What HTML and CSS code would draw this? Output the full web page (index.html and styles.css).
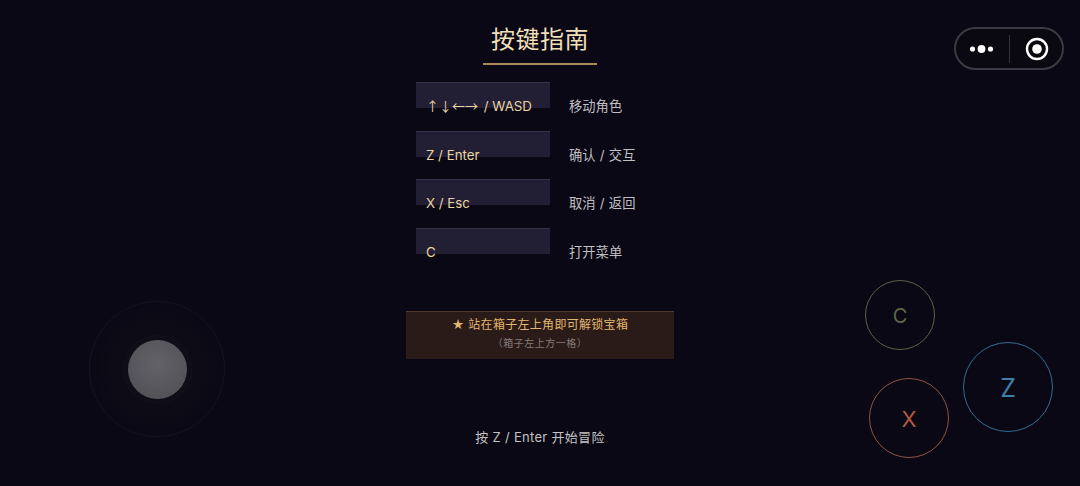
FILE: index.html
```html
<!DOCTYPE html>
<html lang="zh">
<head>
<meta charset="utf-8">
<title>按键指南</title>
<link rel="stylesheet" href="styles.css">
</head>
<body>
<main class="guide">
  <h1 class="title">按键指南</h1>
  <div class="rows">
    <div class="row"><span class="key"><span class="arrows">↑↓←→</span> / WASD</span><span class="desc">移动角色</span></div>
    <div class="row"><span class="key">Z / Enter</span><span class="desc">确认 / 交互</span></div>
    <div class="row"><span class="key">X / Esc</span><span class="desc">取消 / 返回</span></div>
    <div class="row"><span class="key">C</span><span class="desc">打开菜单</span></div>
  </div>
  <div class="notice">
    <div class="notice-main">★ 站在箱子左上角即可解锁宝箱</div>
    <div class="notice-sub">（箱子左上方一格）</div>
  </div>
  <div class="start">按 Z / Enter 开始冒险</div>
</main>

<div class="capsule">
  <svg class="dots" width="26" height="10" viewBox="0 0 26 10"><circle cx="3.5" cy="5" r="2.6"/><circle cx="12.5" cy="5" r="3.9"/><circle cx="21.5" cy="5" r="2.6"/></svg>
  <span class="capsule-line"></span>
  <svg class="target" width="24" height="24" viewBox="0 0 24 24"><circle cx="12" cy="12" r="10" fill="none" stroke="#fff" stroke-width="2.4"/><circle cx="12" cy="12" r="4.8" fill="#fff"/></svg>
</div>

<div class="stick"><div class="stick-knob"></div></div>
<div class="pad pad-c">C</div>
<div class="pad pad-x">X</div>
<div class="pad pad-z">Z</div>
</body>
</html>
```
FILE: styles.css
```css
* { box-sizing: border-box; }
html, body { margin: 0; height: 100%; }
body {
  position: relative;
  width: 1080px;
  height: 486px;
  overflow: hidden;
  background: #090814;
  font-family: Inter, "Noto Sans CJK SC", sans-serif;
}
.guide {
  display: flex;
  flex-direction: column;
  align-items: center;
  padding-top: 22px;
}
.title {
  margin: 0;
  padding: 0 8px;
  height: 43px;
  font-size: 24px;
  font-weight: 400;
  line-height: 35px;
  letter-spacing: 0.5px;
  color: #f0dfb8;
  border-bottom: 2px solid #a88a5a;
}
.rows {
  width: 248px;
  margin-top: 17px;
  display: flex;
  flex-direction: column;
}
.row {
  display: flex;
  height: 48.5px;
  align-items: flex-start;
}
.key {
  width: 134px;
  height: 26px;
  padding-left: 10px;
  line-height: 46px;
  font-size: 13.3px;
  color: #e9d5a4;
  background: #221e33;
  border-top: 1px solid #37324a;
  white-space: nowrap;
}
.arrows {
  margin-right: 2px;
  font-family: "Noto Sans CJK SC", sans-serif;
  font-size: 13px;
}
.desc {
  margin-left: 19px;
  line-height: 48px;
  font-size: 13.3px;
  word-spacing: 0.5px;
  color: #c0bfc3;
  white-space: nowrap;
}
.notice {
  width: 268px;
  height: 48px;
  margin-top: 35px;
  padding-top: 4px;
  background: #2a1b18;
  border-top: 1px solid #4d3a2b;
  text-align: center;
}
.notice-main {
  font-size: 12px;
  line-height: 18px;
  letter-spacing: 0.3px;
  color: #e3b670;
}
.notice-sub {
  font-size: 10px;
  line-height: 19px;
  letter-spacing: 0.5px;
  color: #857c78;
}
.start {
  margin-top: 68px;
  font-size: 13px;
  line-height: 20px;
  letter-spacing: 0.3px;
  color: #c4c3c6;
}
.capsule {
  position: absolute;
  left: 954px;
  top: 27px;
  width: 110px;
  height: 43px;
  display: flex;
  align-items: center;
  border: 2px solid #3b3a43;
  border-radius: 22px;
  background: #0a0911;
}
.dots { margin-left: 13px; fill: #fff; }
.capsule-line { width: 1px; height: 28px; margin-left: 14px; background: #34333a; }
.target { margin-left: 15px; }
.stick {
  position: absolute;
  left: 89px;
  top: 301px;
  width: 136px;
  height: 136px;
  display: flex;
  align-items: center;
  justify-content: center;
  border: 1px solid #15141d;
  border-radius: 50%;
  background: radial-gradient(circle, #0c0b16 0 45%, #090814 70%);
}
.stick-knob {
  width: 59px;
  height: 59px;
  border-radius: 50%;
  background: radial-gradient(circle at 50% 40%, #636268, #525157 80%);
  box-shadow: 0 0 0 4px #0f0e18, 0 0 0 5px #13121c;
}
.pad {
  position: absolute;
  display: flex;
  align-items: center;
  justify-content: center;
  padding-top: 2px;
  border-radius: 50%;
  border: 1px solid;
  background: #090814;
}
.pad-c { left: 865px; top: 280px; width: 70px; height: 70px; font-size: 20px; color: #5f6a42; border-color: #5d6248; }
.pad-x { left: 869px; top: 378px; width: 80px; height: 80px; font-size: 22px; color: #b3593f; border-color: #8d5544; }
.pad-z { left: 963px; top: 342px; width: 90px; height: 90px; font-size: 25px; color: #3f7da6; border-color: #366d92; }
```
